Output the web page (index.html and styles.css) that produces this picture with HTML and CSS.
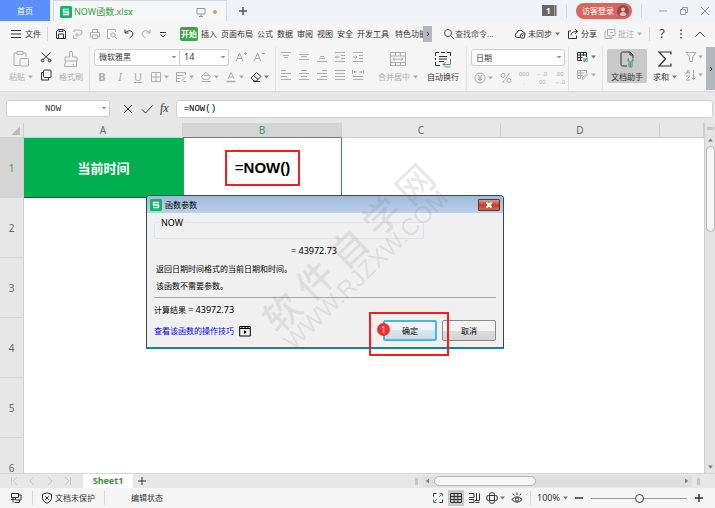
FILE: index.html
```html
<!DOCTYPE html>
<html lang="zh-CN">
  <head>
    <meta charset="UTF-8" />
    <meta name="viewport" content="width=device-width, initial-scale=1.0" />
    <title>NOW函数.xlsx</title>
    <link rel="stylesheet" href="styles.css">
  </head>
  <body>
    <!-- 图标 -->
    <svg class="sprite" aria-hidden="true">
      <symbol id="caret" viewBox="0 0 5 4"><path d="M0 .5h5L2.500 3.500z" fill="currentColor" stroke="none"/></symbol>
      <symbol id="logo" viewBox="0 0 12 12"><rect width="12" height="12" rx="1.500" fill="#0fb566" stroke="none"/><path d="M9 3.500H3.500V6h5v2.500H3" stroke="#fff" stroke-width="1.300"/></symbol>
      <symbol id="monitor" viewBox="0 0 12 12"><path d="M2 2.500h8v5.500H2zM6 8v2M4 10.500h4"/></symbol>
      <symbol id="plus" viewBox="0 0 12 12"><path d="M2 6h8M6 2v8"/></symbol>
      <symbol id="minus" viewBox="0 0 12 12"><path d="M2 6h8"/></symbol>
      <symbol id="restore" viewBox="0 0 12 12"><path d="M2.500 4.500h5v5h-5zM4.500 4.500v-2h5v5h-2"/></symbol>
      <symbol id="close" viewBox="0 0 12 12"><path d="M2 2l8 8M10 2l-8 8"/></symbol>
      <symbol id="menu" viewBox="0 0 12 12"><path d="M1 2.500h10M1 6h10M1 9.500h10"/></symbol>
      <symbol id="save" viewBox="0 0 12 12"><path d="M1.500 10.500v-7l2-2h5l2 2v7zM3.500 10v-4h5v4M4 1.500v2h4v-2"/></symbol>
      <symbol id="pdf" viewBox="0 0 12 12"><path d="M2 4V2h5.500a2.500 2.500 0 0 1 0 5H4M5.500 5L3.500 7l2 2M1.500 7v3.500h3"/></symbol>
      <symbol id="print" viewBox="0 0 12 12"><path d="M3.500 4V1.500h5V4M3 9H1.500V4.500h9V9H9M3.500 7h5v3.500h-5z"/></symbol>
      <symbol id="preview" viewBox="0 0 12 12"><path d="M4 10.500H1.500v-9h8V4"/><circle cx="7" cy="7" r="2.200"/><path d="M8.600 8.600l2.400 2.400"/></symbol>
      <symbol id="undo" viewBox="0 0 12 12"><path d="M2 1.500v3.500h3.500M2.200 4.800C4 2.600 7 2.200 8.800 3.700c2 1.800 1 4.300-2.300 6.300"/></symbol>
      <symbol id="redo" viewBox="0 0 12 12"><path d="M10 1.500v3.500H6.500M9.800 4.800C8 2.600 5 2.200 3.200 3.700c-2 1.800-1 4.300 2.300 6.300"/></symbol>
      <symbol id="more" viewBox="0 0 12 12"><path d="M3 4.500h6M3.500 6.500L6 9l2.500-2.500"/></symbol>
      <symbol id="right" viewBox="0 0 12 12"><path d="M5 4l2 2-2 2"/></symbol>
      <symbol id="search" viewBox="0 0 12 12"><circle cx="5" cy="5" r="3.500"/><path d="M7.500 7.500l3.500 3.500"/></symbol>
      <symbol id="cloud" viewBox="0 0 12 12"><path d="M6 9.500H3.200A2.400 2.400 0 0 1 3 4.800a3.200 3.200 0 0 1 6-.8c1.500.2 2.300 1.200 2.300 2.500"/><circle cx="8.500" cy="8" r="2.300"/><path d="M8.500 7v1.500"/></symbol>
      <symbol id="share" viewBox="0 0 12 12"><path d="M4 3H1.500v7.500h8V7.500M4 7.500c.2-3 2-4 6-4M8 1.200l2.500 2.300L8 5.800"/></symbol>
      <symbol id="comment" viewBox="0 0 12 12"><path d="M3.500 1.500h7.500v6h-3l-2 2v-2H3.500zM2 4H1v6.500h7V9M6 4.500h3"/></symbol>
      <symbol id="dots" viewBox="0 0 12 12"><path d="M5.300 1.500h1.400v1.400H5.300zM5.300 5.300h1.400v1.400H5.300zM5.300 9.100h1.400v1.400H5.300z" fill="currentColor" stroke="none"/></symbol>
      <symbol id="up" viewBox="0 0 12 12"><path d="M1.500 8.500L6 4l4.500 4.500"/></symbol>
      <symbol id="paste" viewBox="0 0 18 18"><path d="M8 15.500H3q-1 0-1-1V4q0-1 1-1h2M11 3h2q1 0 1 1v3M5 1.500h6v3H5z"/><rect x="8" y="8.500" width="8.500" height="7.500" rx="1"/></symbol>
      <symbol id="brush" viewBox="0 0 18 18"><path d="M7.500 7V2.500q0-1 1.500-1t1.500 1V7H15v4H3V7zM3.500 11L2.500 16.500h12V11M11.500 14v2.500"/></symbol>
      <symbol id="cut" viewBox="0 0 12 12"><path d="M1.500 1.500L9 8.500M10.500 1.500L3 8.500"/><circle cx="2.500" cy="9.500" r="1.300"/><circle cx="9.500" cy="9.500" r="1.300"/></symbol>
      <symbol id="copy" viewBox="0 0 12 12"><rect x="3.500" y="1" width="7.500" height="7.500" rx="1"/><path d="M3.500 3.500H1.500v7.500h7V8.500"/></symbol>
      <symbol id="borders" viewBox="0 0 12 12"><path d="M1.500 1.500h9v9h-9zM6 1.500v9M1.500 6h9"/></symbol>
      <symbol id="cellstyle" viewBox="0 0 12 12"><path d="M10.500 4V1.500h-9v9H5M1.500 4.500h7M1.500 7.500h4M6 10.500l5-5M8 10.500h3"/></symbol>
      <symbol id="bucket" viewBox="0 0 12 12"><path d="M6 1.500L1.500 5.500l2 3h5l2-3zM1.500 10.500h9M4 4.500h5"/></symbol>
      <symbol id="fontcolor" viewBox="0 0 12 12"><path d="M3 8L6 1.500 9 8M4 6h4"/><path d="M1.500 10.500h9" stroke-width="1.600"/></symbol>
      <symbol id="eraser" viewBox="0 0 12 12"><path d="M6.500 1.500L11 5.500l-4.500 4.500H4L1 7zM3.500 4.500L8 8.500M3.500 10.500h6.500"/></symbol>
      <symbol id="abig" viewBox="0 0 12 12"><path d="M1 10.500L4.500 2 8 10.500M2.300 7.500h4.400M9 2.500h3M10.500 1v3"/></symbol>
      <symbol id="asmall" viewBox="0 0 12 12"><path d="M1 10.500L4.500 2 8 10.500M2.300 7.500h4.400M9 2.500h3"/></symbol>
      <symbol id="atop" viewBox="0 0 12 12"><path d="M1 1.500h10M3 4.500h6M4 6.500h4"/></symbol>
      <symbol id="amid" viewBox="0 0 12 12"><path d="M1 3.500h10M3 5.500h6M1 8.500h10"/></symbol>
      <symbol id="abot" viewBox="0 0 12 12"><path d="M4 5.500h4M3 7.500h6M1 10.500h10"/></symbol>
      <symbol id="outdent" viewBox="0 0 12 12"><path d="M1 1.500h10M7 4.500h4M7 7.500h4M1 10.500h10M5.500 6h-4M3 4.500L1.500 6 3 7.500"/></symbol>
      <symbol id="indent" viewBox="0 0 12 12"><path d="M1 1.500h10M7 4.500h4M7 7.500h4M1 10.500h10M1 6h4M3.500 4.500L5 6 3.500 7.500"/></symbol>
      <symbol id="left" viewBox="0 0 12 12"><path d="M1 1.500h5M1 4.500h10M1 7.500h6M1 10.500h10"/></symbol>
      <symbol id="center" viewBox="0 0 12 12"><path d="M3.500 1.500h5M1 4.500h10M3 7.500h6M1 10.500h10"/></symbol>
      <symbol id="alignright" viewBox="0 0 12 12"><path d="M6 1.500h5M1 4.500h10M5 7.500h6M1 10.500h10"/></symbol>
      <symbol id="justify" viewBox="0 0 12 12"><path d="M1 1.500h10M1 4.500h10M1 7.500h10M1 10.500h10"/></symbol>
      <symbol id="spread" viewBox="0 0 12 12"><path d="M.5 1v4M11.500 1v4M2 3h3M7 3h3M3 2L2 3l1 1M9 2l1 1-1 1M1 7.500h10M1 10.500h10"/></symbol>
      <symbol id="merge" viewBox="0 0 18 18"><path d="M1.500 2.500h15v13h-15zM1.500 6h15M1.500 12.500h15M6.500 2.500V6M11.500 2.500V6M6.500 12.500v3M11.500 12.500v3M4 9.200h10M5.500 7.700L4 9.200l1.500 1.500M12.500 7.700L14 9.200l-1.500 1.500"/></symbol>
      <symbol id="wrap" viewBox="0 0 18 18"><path d="M1.500 6V2.500H5M7 2.500h4M13 2.500h3.500V6M1.500 12v3.500H6M1.500 8v2M5 6.500h8M5 9h8M5 11.500h5"/><path d="M16.500 9v5.500H9M11.500 12L9 14.500 11.500 17h5" stroke="#4ea077"/></symbol>
      <symbol id="yen" viewBox="0 0 12 12"><circle cx="6" cy="6" r="5"/><path d="M4 3l2 2.500L8 3M6 5.500V9M4 6h4M4 7.500h4"/></symbol>
      <symbol id="percent" viewBox="0 0 12 12"><circle cx="3" cy="3.500" r="2"/><circle cx="9" cy="8.500" r="2"/><path d="M9.500 1l-7 10"/></symbol>
      <symbol id="table" viewBox="0 0 12 12"><path d="M6 9.500H1.500v-8h9V6M1.500 4h9M1.500 6.500h5M4.500 1.500v8M7.500 1.500V5"/><path d="M7 8h5M11 6.500L8 11.500M7 10h5" stroke="#3ba05f"/></symbol>
      <symbol id="tablepen" viewBox="0 0 12 12"><path d="M5 9.500H1.500v-8h9V4M1.500 4h7M1.500 6.500h5M4.500 1.500v8M6 10.500l.5-2L10.500 5l1 1-4 4z"/></symbol>
      <symbol id="helper" viewBox="0 0 18 18"><path d="M9 16H4.500Q3 16 3 14.500v-11Q3 2 4.500 2H12l3 3v3M12 2v3h3"/><path d="M10.500 8.500v2l2 1.500 2-1.500v-2M12.500 12v5M10.500 8.500q-2 2 .5 4V17h3v-4.500q2.500-2 .5-4" stroke="#4ea077"/></symbol>
      <symbol id="sigma" viewBox="0 0 18 18"><path d="M15 4.500V2H3l6.500 7L3 16h12v-2.500" stroke-width="1.200"/></symbol>
      <symbol id="filter" viewBox="0 0 12 12"><path d="M1 1.500h10L7.500 6v4.500h-3V6z"/></symbol>
      <symbol id="sort" viewBox="0 0 12 12"><path d="M1 5L3 .8 5 5M1.600 3.700h2.800M1 7h4l-4 4h4M8.500 1v9.500M6.500 8.500l2 2 2-2"/></symbol>
      <symbol id="check" viewBox="0 0 12 12"><path d="M1 6.500L4.500 10 11.500 2.500"/></symbol>
      <symbol id="first" viewBox="0 0 12 12"><path d="M3.500 2v8M9 2L5 6l4 4"/></symbol>
      <symbol id="prev" viewBox="0 0 12 12"><path d="M8 2L4 6l4 4"/></symbol>
      <symbol id="next" viewBox="0 0 12 12"><path d="M4 2l4 4-4 4"/></symbol>
      <symbol id="last" viewBox="0 0 12 12"><path d="M8.500 2v8M3 2l4 4-4 4"/></symbol>
      <symbol id="record" viewBox="0 0 12 12"><path d="M1.500 1.500h7v4h-7zM3 5.500v5M1 7.500h3.500M4.500 10.500h5V8M8.500 3h2.500v5H5.500v-2.500"/></symbol>
      <symbol id="shield" viewBox="0 0 12 12"><path d="M6 .8l4.500 1.500v4Q10.500 9.500 6 11.300 1.500 9.500 1.500 6.300v-4zM4.200 4.200l3.600 3.600M7.800 4.200L4.200 7.800"/></symbol>
      <symbol id="full" viewBox="0 0 12 12"><path d="M1.500 4.500v-3h3M10.500 7.500v3h-3"/><path d="M7.500 1.500h3v3M10.500 1.500l-3.500 3.500M4.500 10.500h-3v-3M1.500 10.500L5 7" stroke="#3ba05f"/></symbol>
      <symbol id="gridview" viewBox="0 0 12 12"><path d="M.5 1.500h11v9H.5zM.5 4.500h11M.5 7.500h11M4.200 1.500v9M7.800 1.500v9"/></symbol>
      <symbol id="pageview" viewBox="0 0 12 12"><path d="M1 1.500h5v4H1M1 7.500h5v3H1M8.500 1v7M11.500 1.500v7H7M11.500 10.500h-4"/></symbol>
      <symbol id="cross" viewBox="0 0 12 12"><rect x="3.500" y=".8" width="5" height="10.400" rx="1.500"/><rect x=".8" y="3.500" width="10.400" height="5" rx="1.500"/></symbol>
      <symbol id="eye" viewBox="0 0 12 12"><path d="M.8 7.500Q6 2 11.200 7.500 6 13 .8 7.500zM6 .5v2.500M2 1.500l1.300 2M10 1.500l-1.300 2"/><circle cx="6" cy="7.500" r="1.700"/></symbol>
      <symbol id="video" viewBox="0 0 12 12"><path d="M.7 1.500h10.600v9.500H.7zM.7 3.500h10.600M3 1.500v2M6 1.500v2M9 1.500v2"/><path d="M5 5.300v3.600L7.800 7z" fill="currentColor" stroke="none"/></symbol>
    </svg>

    <!-- 标题栏 -->
    <header class="titlebar">
      <button class="home">首页</button>
      <div class="filetab">
        <svg class="ic"><use href="#logo"/></svg>
        <span class="filename">NOW函数.xlsx</span>
        <svg class="ic grey"><use href="#monitor"/></svg>
        <i class="unsaved"></i>
      </div>
      <button class="newtab" aria-label="新建"><svg class="ic bold"><use href="#plus"/></svg></button>
      <div class="window">
        <span class="count">1</span>
        <i class="line"></i>
        <button class="login">访客登录<svg class="avatar" viewBox="0 0 12 12"><circle cx="6" cy="6" r="6" fill="#8d4a57"/><circle cx="6" cy="4.500" r="2" fill="#e9b8b8"/><path d="M2.500 10Q3 7 6 7t3.500 3Q6 12.500 2.500 10z" fill="#e9b8b8"/></svg></button>
        <i class="line"></i>
        <button aria-label="最小化"><svg class="ic grey"><use href="#minus"/></svg></button>
        <button aria-label="还原"><svg class="ic grey"><use href="#restore"/></svg></button>
        <button aria-label="关闭"><svg class="ic grey"><use href="#close"/></svg></button>
      </div>
    </header>

    <!-- 菜单 -->
    <nav class="menubar">
      <button class="file"><svg class="ic"><use href="#menu"/></svg>文件</button>
      <i class="line"></i>
      <div class="quick">
        <button aria-label="保存"><svg class="ic"><use href="#save"/></svg></button>
        <button aria-label="输出"><svg class="ic pale"><use href="#pdf"/></svg></button>
        <button aria-label="打印"><svg class="ic pale"><use href="#print"/></svg></button>
        <button aria-label="预览"><svg class="ic pale"><use href="#preview"/></svg></button>
        <button aria-label="撤销"><svg class="ic"><use href="#undo"/></svg></button>
        <button aria-label="恢复"><svg class="ic pale"><use href="#redo"/></svg></button>
        <button aria-label="更多"><svg class="ic"><use href="#more"/></svg></button>
      </div>
      <div class="tabs">
        <button class="active">开始</button>
        <button>插入</button>
        <button>页面布局</button>
        <button>公式</button>
        <button>数据</button>
        <button>审阅</button>
        <button>视图</button>
        <button>安全</button>
        <button class="wide">开发工具</button>
        <button class="cut">特色功能</button>
      </div>
      <button class="scrolltabs" aria-label="更多选项卡"><svg class="ic"><use href="#right"/></svg></button>
      <button class="find"><svg class="ic"><use href="#search"/></svg>查找命令...</button>
      <div class="share">
        <button><svg class="ic"><use href="#cloud"/></svg>未同步<svg class="caret"><use href="#caret"/></svg></button>
        <button><svg class="ic"><use href="#share"/></svg>分享</button>
        <button class="pale"><svg class="ic"><use href="#comment"/></svg>批注<svg class="caret"><use href="#caret"/></svg></button>
        <i class="line"></i>
      </div>
      <div class="help">
        <button class="ask">?</button>
        <button aria-label="选项"><svg class="ic"><use href="#dots"/></svg></button>
        <button aria-label="收起"><svg class="ic"><use href="#up"/></svg></button>
      </div>
    </nav>

    <!-- 功能区 -->
    <section class="ribbon">
      <div class="group clip">
        <button class="big pale"><svg class="ic18"><use href="#paste"/></svg><span>粘贴<svg class="caret"><use href="#caret"/></svg></span></button>
        <div class="stack">
          <button aria-label="剪切"><svg class="ic"><use href="#cut"/></svg></button>
          <button aria-label="复制"><svg class="ic"><use href="#copy"/></svg></button>
        </div>
        <button class="big pale"><svg class="ic18"><use href="#brush"/></svg><span>格式刷</span></button>
      </div>
      <div class="group font">
        <div class="row">
          <div class="selects">
            <select class="drop family" aria-label="字体"><option>微软雅黑</option></select>
            <select class="drop size" aria-label="字号"><option>14</option></select>
          </div>
          <button class="pale" aria-label="增大字号"><svg class="ic"><use href="#abig"/></svg></button>
          <button class="pale" aria-label="减小字号"><svg class="ic"><use href="#asmall"/></svg></button>
        </div>
        <div class="row tools">
          <button class="pale letter"><b>B</b></button>
          <button class="pale letter"><em>I</em></button>
          <button class="pale letter"><u>U</u></button>
          <button class="pale" aria-label="边框"><svg class="ic"><use href="#borders"/></svg><svg class="caret"><use href="#caret"/></svg></button>
          <button class="pale" aria-label="单元格样式"><svg class="ic"><use href="#cellstyle"/></svg><svg class="caret"><use href="#caret"/></svg></button>
          <button class="pale" aria-label="填充"><svg class="ic"><use href="#bucket"/></svg><svg class="caret"><use href="#caret"/></svg></button>
          <button class="pale" aria-label="字体颜色"><svg class="ic"><use href="#fontcolor"/></svg><svg class="caret"><use href="#caret"/></svg></button>
          <button aria-label="清除"><svg class="ic"><use href="#eraser"/></svg><svg class="caret"><use href="#caret"/></svg></button>
        </div>
      </div>
      <div class="group align">
        <div class="icons pale">
          <button aria-label="顶端对齐"><svg class="ic"><use href="#atop"/></svg></button>
          <button aria-label="垂直居中"><svg class="ic"><use href="#amid"/></svg></button>
          <button aria-label="底端对齐"><svg class="ic"><use href="#abot"/></svg></button>
          <button aria-label="减少缩进"><svg class="ic"><use href="#outdent"/></svg></button>
          <button aria-label="增加缩进"><svg class="ic"><use href="#indent"/></svg></button>
          <button aria-label="左对齐"><svg class="ic"><use href="#left"/></svg></button>
          <button aria-label="居中"><svg class="ic"><use href="#center"/></svg></button>
          <button aria-label="右对齐"><svg class="ic"><use href="#alignright"/></svg></button>
          <button aria-label="两端对齐"><svg class="ic"><use href="#justify"/></svg></button>
          <button aria-label="分散对齐"><svg class="ic"><use href="#spread"/></svg></button>
        </div>
        <button class="big pale"><svg class="ic18"><use href="#merge"/></svg><span>合并居中<svg class="caret"><use href="#caret"/></svg></span></button>
        <button class="big"><svg class="ic18"><use href="#wrap"/></svg><span>自动换行</span></button>
      </div>
      <div class="group number">
        <select class="drop" aria-label="数字格式"><option>日期</option></select>
        <div class="row pale">
          <button aria-label="货币"><svg class="ic"><use href="#yen"/></svg><svg class="caret"><use href="#caret"/></svg></button>
          <button aria-label="百分比"><svg class="ic"><use href="#percent"/></svg></button>
          <button class="digits">000<br>,</button>
          <button class="digits">←.0<br>.00</button>
          <button class="digits">.00<br>→.0</button>
        </div>
      </div>
      <div class="group stack tablegroup">
        <button aria-label="表格样式"><svg class="ic"><use href="#table"/></svg><svg class="caret"><use href="#caret"/></svg></button>
        <button class="pale" aria-label="条件格式"><svg class="ic"><use href="#tablepen"/></svg><svg class="caret"><use href="#caret"/></svg></button>
      </div>
      <div class="group last">
        <button class="big pressed"><svg class="ic18"><use href="#helper"/></svg><span>文档助手</span></button>
        <button class="big"><svg class="ic18"><use href="#sigma"/></svg><span>求和<svg class="caret"><use href="#caret"/></svg></span></button>
        <div class="stack pale">
          <button aria-label="筛选"><svg class="ic"><use href="#filter"/></svg><svg class="caret"><use href="#caret"/></svg></button>
          <button aria-label="排序"><svg class="ic"><use href="#sort"/></svg><svg class="caret"><use href="#caret"/></svg></button>
        </div>
      </div>
      <button class="scrollribbon" aria-label="向右"><svg class="ic"><use href="#right"/></svg></button>
    </section>

    <!-- 编辑栏 -->
    <section class="formulabar">
      <input class="drop namebox" type="text" value="NOW" aria-label="名称框">
      <button aria-label="取消输入"><svg class="ic"><use href="#close"/></svg></button>
      <button aria-label="输入"><svg class="ic"><use href="#check"/></svg></button>
      <button class="fx">fx</button>
      <input class="formula" type="text" value="=NOW()" aria-label="编辑栏">
    </section>

    <!-- 表格 -->
    <main class="workbook">
      <div class="sheet">
        <table>
          <thead>
            <tr>
              <th class="corner"></th>
              <th class="col">A</th>
              <th class="col selected">B</th>
              <th class="col">C</th>
              <th class="col">D</th>
              <th></th>
            </tr>
          </thead>
          <tbody>
            <tr><th class="selected">1</th><td class="now">当前时间</td><td class="editing"><span class="mark">=<b>NOW()</b></span></td><td></td><td></td><td></td></tr>
            <tr><th>2</th><td></td><td></td><td></td><td></td><td></td></tr>
            <tr><th>3</th><td></td><td></td><td></td><td></td><td></td></tr>
            <tr><th>4</th><td></td><td></td><td></td><td></td><td></td></tr>
            <tr><th>5</th><td></td><td></td><td></td><td></td><td></td></tr>
            <tr><th>6</th><td></td><td></td><td></td><td></td><td></td></tr>
          </tbody>
        </table>
      </div>
      <div class="vscroll">
        <i class="split"></i>
        <svg class="caret flip"><use href="#caret"/></svg>
        <i class="thumb"></i>
        <svg class="caret"><use href="#caret"/></svg>
      </div>

      <!-- 函数参数对话框 -->
      <div class="dialog" role="dialog" aria-label="函数参数">
        <div class="caption">
          <svg class="ic"><use href="#logo"/></svg>
          <span>函数参数</span>
          <button class="x" aria-label="关闭"><svg viewBox="0 0 8 8"><path d="M1.500 1.500l5 5M6.500 1.500l-5 5"/></svg></button>
        </div>
        <div class="content">
          <fieldset><legend>NOW</legend></fieldset>
          <p class="value">= 43972.73</p>
          <p>返回日期时间格式的当前日期和时间。</p>
          <p>该函数不需要参数。</p>
          <hr>
          <p class="result">计算结果 <span>= 43972.73</span></p>
          <div class="actions">
            <a href="#">查看该函数的操作技巧</a>
            <svg class="ic"><use href="#video"/></svg>
            <button class="ok">确定</button>
            <button>取消</button>
            <i class="frame"></i>
            <span class="step">1</span>
          </div>
        </div>
      </div>

      <div class="watermark">
        <div><span>软</span><span>件</span><span>自</span><span>学</span><span>网</span></div>
        <small>WWW.RJZXW.COM</small>
      </div>
    </main>

    <!-- 工作表标签 -->
    <div class="sheetbar">
      <div class="steps">
        <button aria-label="第一个"><svg class="ic"><use href="#first"/></svg></button>
        <button aria-label="上一个"><svg class="ic"><use href="#prev"/></svg></button>
        <button aria-label="下一个"><svg class="ic"><use href="#next"/></svg></button>
        <button aria-label="最后一个"><svg class="ic"><use href="#last"/></svg></button>
      </div>
      <button class="sheettab">Sheet1</button>
      <button class="addsheet" aria-label="添加工作表"><svg class="ic"><use href="#plus"/></svg></button>
      <div class="hscroll">
        <i class="grip"></i>
        <div class="track">
          <svg class="caret toleft"><use href="#caret"/></svg>
          <i class="thumb"></i>
          <svg class="caret toright"><use href="#caret"/></svg>
        </div>
        <i class="grip"></i>
      </div>
    </div>

    <!-- 状态栏 -->
    <footer class="status">
      <button class="rec" aria-label="录制"><svg class="ic"><use href="#record"/></svg></button>
      <i class="line"></i>
      <button class="protect"><svg class="ic"><use href="#shield"/></svg>文档未保护</button>
      <i class="line"></i>
      <span class="mode">编辑状态</span>
      <div class="views">
        <button aria-label="全屏"><svg class="ic"><use href="#full"/></svg></button>
        <button class="on" aria-label="普通"><svg class="ic"><use href="#gridview"/></svg></button>
        <button aria-label="分页"><svg class="ic"><use href="#pageview"/></svg></button>
        <button aria-label="阅读"><svg class="ic"><use href="#cross"/></svg><svg class="caret"><use href="#caret"/></svg></button>
        <button aria-label="护眼"><svg class="ic"><use href="#eye"/></svg></button>
      </div>
      <i class="line"></i>
      <button class="percent">100%<svg class="caret"><use href="#caret"/></svg></button>
      <button aria-label="缩小"><svg class="ic bold"><use href="#minus"/></svg></button>
      <input class="zoom" type="range" min="0" max="100" value="50" aria-label="缩放">
      <button aria-label="放大"><svg class="ic bold"><use href="#plus"/></svg></button>
    </footer>
  </body>
</html>
```

FILE: styles.css
```css
* {
  box-sizing: border-box;
}
body {
  margin: 0;
  height: 100vh;
  display: flex;
  flex-direction: column;
  overflow: hidden;
  background: #e7e7e7;
  color: #333;
  font: 8px/12px "Noto Sans", "Noto Sans CJK SC", sans-serif;
}
button,
input,
select {
  font: inherit;
  color: inherit;
}
button {
  display: flex;
  align-items: center;
  flex: none;
  padding: 0;
  border: 0;
  background: none;
  white-space: nowrap;
}
.sprite {
  display: none;
}
.ic,
.ic18 {
  width: 12px;
  height: 12px;
  flex: none;
  fill: none;
  stroke: currentColor;
}
.ic18 {
  width: 18px;
  height: 18px;
}
.bold {
  stroke-width: 1.5;
}
.caret {
  width: 5px;
  height: 4px;
  flex: none;
  margin-left: 3px;
  color: #777;
}
.pale,
.pale .caret {
  color: #adadad;
}
.grey {
  color: #999;
}
.line {
  width: 1px;
  height: 14px;
  flex: none;
  background: #d4d6d9;
}

/* 标题栏 */
.titlebar {
  display: flex;
  flex: none;
  height: 21px;
  background: #eff3f8;
}
.home {
  width: 50px;
  justify-content: center;
  background: #5c8efb;
  color: #fff;
}
.filetab {
  display: flex;
  align-items: center;
  width: 174px;
  margin-left: 3px;
  padding: 2px 6px 0;
  background: #f5f6f7;
  border: 1px solid #d5dae3;
  border-bottom: 0;
}
.filename {
  flex: 1;
  margin-left: 2px;
  font-size: 9px;
  color: #35a13c;
}
.unsaved {
  width: 4px;
  height: 4px;
  margin: 0 3px 0 6px;
  border-radius: 50%;
  background: #ea9a52;
}
.newtab {
  padding: 0 10px;
  color: #555;
}
.window {
  display: flex;
  align-items: center;
  gap: 9px;
  margin-left: auto;
  padding-right: 4px;
}
.count {
  width: 15px;
  height: 11px;
  padding-left: 4px;
  border-right: 3px double #aaa;
  background: #686868;
  color: #fff;
  font-weight: bold;
  line-height: 11px;
}
.login {
  gap: 3px;
  height: 16px;
  padding: 0 3px 0 6px;
  border-radius: 8px;
  background: #d9655c;
  color: #fff;
}
.avatar {
  width: 12px;
  height: 12px;
}
.window .line + button[aria-label] {
  margin-left: 6px;
}

/* 菜单 */
.menubar {
  display: flex;
  align-items: center;
  flex: none;
  height: 26px;
  padding-left: 10px;
  background: #f5f5f5;
}
.file {
  gap: 3px;
  padding-right: 6px;
}
.quick {
  display: flex;
  gap: 5px;
  margin: 0 11px 0 7px;
}
.tabs {
  display: flex;
  align-items: center;
  gap: 3px;
  overflow: hidden;
}
.tabs button {
  padding-right: 1px;
}
.tabs .active {
  height: 14px;
  padding: 0 1px;
  border-radius: 2px;
  background: #3ba643;
  color: #fff;
  font-weight: bold;
}
.tabs .wide {
  margin-right: 2px;
}
.tabs .cut {
  width: 28px;
  overflow: hidden;
}
.scrolltabs {
  width: 9px;
  height: 16px;
  justify-content: center;
  background: #b3b7bf;
}
.find {
  margin-left: 11px;
  color: #555;
}
.share {
  display: flex;
  align-items: center;
  gap: 7px;
  margin-left: auto;
}
.share button {
  gap: 2px;
}
.share .caret {
  margin-left: 1px;
}
.help {
  display: flex;
  gap: 7px;
  padding: 0 9px 0 6px;
}
.ask {
  width: 12px;
  justify-content: center;
  font-size: 12px;
}

/* 功能区 */
.ribbon {
  display: flex;
  flex: none;
  height: 45px;
  background: #f5f5f5;
  border-bottom: 1px solid #d9d9d9;
}
.group {
  display: flex;
  flex: none;
  padding: 2px 4px 0;
  border-right: 1px solid #e2e2e2;
}
.big {
  flex-direction: column;
  align-self: flex-start;
  gap: 3px;
  padding-top: 1px;
  height: 34px;
}
.big span {
  display: flex;
  align-items: center;
}
.stack {
  display: flex;
  flex-direction: column;
  gap: 6px;
  padding-top: 2px;
}
.clip {
  gap: 7px;
  padding: 2px 6px 0 9px;
}
.font {
  flex-direction: column;
  gap: 4px;
  padding-right: 6px;
}
.row {
  display: flex;
  align-items: center;
  gap: 6px;
  height: 16px;
}
.selects {
  display: flex;
}
.drop {
  appearance: none;
  height: 17px;
  margin: 0;
  padding: 0 4px;
  border: 1px solid #cfcfcf;
  border-radius: 3px;
  background:
    linear-gradient(45deg, transparent 60%, #999 60%) right 5px center / 3px 3px no-repeat,
    linear-gradient(-45deg, transparent 60%, #999 60%) right 2px center / 3px 3px no-repeat,
    #fff;
}
.family {
  width: 86px;
  border-radius: 3px 0 0 3px;
}
.size {
  width: 49px;
  border-left: 0;
  border-radius: 0 3px 3px 0;
  font-size: 9px;
}
.tools {
  padding-left: 2px;
}
.tools .caret {
  margin-left: 2px;
}
.letter {
  width: 12px;
  justify-content: center;
  font-size: 11px;
}
.align {
  gap: 9px;
  padding-left: 4px;
  padding-right: 7px;
}
.icons {
  display: grid;
  grid-template-columns: repeat(5, 12px);
  gap: 6px;
  align-content: start;
  padding: 2px 5px 0 0;
}
.number {
  flex-direction: column;
  gap: 4px;
  padding-right: 3px;
}
.number .row {
  gap: 7px;
  padding-left: 3px;
}
.number .caret {
  margin-left: 2px;
}
.digits {
  font-family: "Liberation Sans", sans-serif;
  font-size: 6px;
  line-height: 8px;
}
.tablegroup {
  padding: 4px 6px 0 7px;
}
.last {
  flex: 1;
  gap: 6px;
  padding-right: 0;
  border-right: 0;
}
.pressed {
  padding-left: 4px;
  padding-right: 4px;
  border-radius: 2px;
  background: #c9c9c9;
}
.last .stack {
  margin-left: 2px;
}
.last .stack .caret {
  margin-left: 1px;
}
.scrollribbon {
  width: 9px;
  height: 43px;
  justify-content: center;
  background: #b3b7bf;
}

/* 编辑栏 */
.formulabar {
  display: flex;
  align-items: center;
  flex: none;
  gap: 7px;
  height: 31px;
  padding: 2px 2px 0 6px;
  font-family: "Liberation Mono", monospace;
  font-size: 9px;
}
.namebox {
  width: 104px;
  margin-right: 5px;
  padding-right: 14px;
  text-align: center;
}
.fx {
  font: italic 12px "Liberation Serif", serif;
}
.formula {
  flex: 1;
  min-width: 0;
  height: 18px;
  padding: 0 7px;
  border: 1px solid #cfcfcf;
  border-radius: 3px;
  background: #fff;
  color: #000;
}

/* 表格 */
.workbook {
  position: relative;
  display: flex;
  flex: 1;
  min-height: 0;
}
.sheet {
  flex: 1;
  overflow: hidden;
  background: #fff;
}
table {
  width: 100%;
  table-layout: fixed;
  border-collapse: separate;
  border-spacing: 0;
}
th {
  padding: 0;
  border-right: 1px solid #cfcfcf;
  background: #e7e7e7;
  color: #666;
  font-size: 10px;
  font-weight: normal;
}
thead th {
  height: 15px;
  border-bottom: 1px solid #cfcfcf;
}
tbody th {
  border-bottom: 1px solid #d6d6d6;
}
.corner {
  width: 24px;
  background: linear-gradient(135deg, transparent 50%, #bbb 50%) right 3px bottom 2px / 8px 8px no-repeat, #e7e7e7;
}
.col {
  width: 159px;
}
th.selected {
  background: #d5d5d5;
  color: #35a13c;
}
thead .selected {
  border-bottom-color: #35a13c;
}
td {
  height: 60px;
  padding: 0;
  text-align: center;
}
.now {
  border-bottom: 1px solid #1d5c34;
  background: #00b050;
  color: #fff;
  font-size: 13px;
  font-weight: bold;
}
.editing {
  border: 1px solid #35a13c;
  border-top: 0;
  color: #000;
  font-family: "Liberation Sans", sans-serif;
  font-size: 15px;
}
.mark {
  display: inline-block;
  padding: 7px 8px;
  border: 2px solid #f81d1d;
  line-height: 18px;
}
.vscroll {
  display: flex;
  flex-direction: column;
  align-items: center;
  width: 11px;
  padding: 4px 0;
  border-left: 1px solid #cfcfcf;
  background: #e3e3e3;
}
.vscroll .caret {
  margin: 0;
}
.flip {
  transform: rotate(180deg);
}
.split {
  width: 7px;
  height: 3px;
  margin-bottom: 8px;
  background: #c6c6c6;
}
.thumb {
  border: 1px solid #b5b5b5;
  border-radius: 5px;
  background: #f7f7f7;
}
.vscroll .thumb {
  width: 9px;
  height: 86px;
  margin: 4px 0 auto;
}

/* 对话框 */
.dialog {
  position: absolute;
  top: 72px;
  left: 146px;
  width: 358px;
  border: 1px solid #3d4650;
  border-bottom: 2px solid #17819a;
  border-radius: 4px 4px 0 0;
  background: #f0f0f0;
  color: #000;
}
.caption {
  display: flex;
  align-items: center;
  gap: 3px;
  height: 17px;
  padding: 0 3px;
  border-radius: 3px 3px 0 0;
  background: linear-gradient(#9fbad8, #b9d0ea);
}
.x {
  width: 22px;
  height: 12px;
  margin-left: auto;
  justify-content: center;
  border: 1px solid #6d2c26;
  border-radius: 1px;
  background: linear-gradient(#dc9a8c, #c0402c 50%, #cf6a50);
}
.x svg {
  width: 8px;
  height: 8px;
  stroke: #fff;
  stroke-width: 2;
}
.content {
  padding: 9px 7px 6px;
}
fieldset {
  width: 270px;
  height: 17px;
  margin: 0;
  padding: 0;
  border: 1px solid #dce3ea;
  border-radius: 2px;
}
legend {
  margin-left: 4px;
  padding: 0 2px;
  font-size: 9px;
  line-height: 0;
}
p {
  margin: 0 0 5px 2px;
}
.value {
  margin: 6px 0 6px 137px;
}
.value,
.result span {
  font-size: 9px;
}
hr {
  margin: 0 0 6px;
  border: 0;
  border-top: 1px solid #a5a5a5;
}
.result {
  margin: 0 0 4px;
}
.actions {
  position: relative;
  display: flex;
  align-items: center;
  gap: 5px;
}
.actions a {
  color: #0000f0;
  text-decoration: none;
}
.actions button {
  width: 54px;
  height: 21px;
  justify-content: center;
  border: 1px solid #8a8a8a;
  border-radius: 2px;
  background: linear-gradient(#f3f3f3 50%, #dedede 50%, #d2d2d2);
}
.actions .ok {
  margin-left: auto;
  border: 2px solid #45b8e0;
  background: linear-gradient(#eef5f8 50%, #d8e7ee 50%, #cbdde6);
}
.frame {
  position: absolute;
  top: -8px;
  right: 47px;
  width: 80px;
  height: 44px;
  border: 2px solid #f81d1d;
}
.step {
  position: absolute;
  top: 3px;
  right: 106px;
  width: 13px;
  height: 13px;
  border-radius: 50%;
  background: #ee3030;
  color: #fff;
  line-height: 13px;
  text-align: center;
}
.watermark {
  position: absolute;
  top: 105px;
  left: 245px;
  width: 222px;
  transform: rotate(-44deg);
  color: rgba(120, 120, 120, 0.16);
  white-space: nowrap;
  pointer-events: none;
}
.watermark div {
  display: flex;
  justify-content: space-between;
  font-size: 37px;
  font-weight: 500;
  line-height: 34px;
}
.watermark small {
  display: block;
  font-family: "Liberation Sans", sans-serif;
  font-size: 24px;
  line-height: 22px;
}

/* 工作表标签 */
.sheetbar {
  display: flex;
  align-items: center;
  flex: none;
  height: 15px;
  border-top: 1px solid #d6d6d6;
}
.steps {
  display: flex;
  gap: 6px;
  padding: 0 9px 0 8px;
  color: #c8c8c8;
}
.sheettab {
  width: 50px;
  height: 14px;
  justify-content: center;
  background: #fff;
  color: #1f9a2c;
  font-size: 9px;
  font-weight: bold;
}
.addsheet {
  padding: 0 3px;
}
.hscroll {
  display: flex;
  align-items: center;
  gap: 5px;
  width: 42%;
  margin-left: auto;
  padding-right: 15px;
}
.grip {
  width: 3px;
  height: 7px;
  background: #c6c6c6;
}
.track {
  display: flex;
  flex: 1;
  align-items: center;
  gap: 4px;
  height: 11px;
  background: #dedede;
}
.hscroll .thumb {
  width: 102px;
  height: 10px;
}
.toleft {
  margin-left: 2px;
  transform: rotate(90deg);
}
.toright {
  transform: rotate(-90deg);
  margin: 0 3px 0 auto;
}

/* 状态栏 */
.status {
  display: flex;
  align-items: center;
  flex: none;
  height: 20px;
  padding: 0 10px;
  background: #f5f5f5;
}
.rec {
  padding-right: 10px;
}
.protect {
  gap: 2px;
  padding: 0 9px 0 8px;
}
.mode {
  padding-left: 26px;
}
.views {
  display: flex;
  gap: 2px;
  margin-left: auto;
  padding-right: 5px;
}
.views button {
  height: 16px;
  padding: 0 2px;
}
.views .on {
  background: #c9c9c9;
}
.views .caret {
  margin-left: 2px;
}
.percent {
  padding: 0 5px 0 6px;
  font-size: 9px;
}
.zoom {
  appearance: none;
  width: 96px;
  height: 10px;
  margin: 0 6px;
  background: linear-gradient(#999, #999) center / 100% 1px no-repeat;
}
.zoom::-webkit-slider-thumb {
  appearance: none;
  width: 9px;
  height: 9px;
  border: 1px solid #444;
  border-radius: 50%;
  background: #f5f5f5;
}
```
